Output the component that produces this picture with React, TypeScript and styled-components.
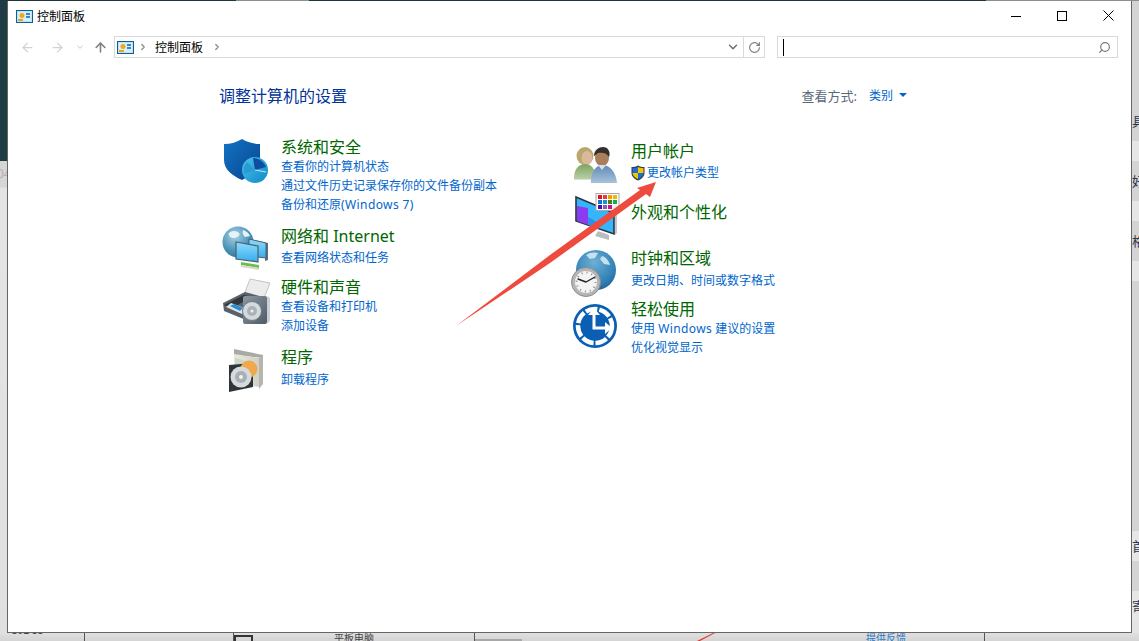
import React from "react";
import styled, { createGlobalStyle } from "styled-components";
import { ArrowLeft, ArrowRight, ArrowUp, ChevronDown, ChevronRight, RotateCw, Search } from "lucide-react";

const FONT = `"Noto Sans", "Noto Sans CJK SC", sans-serif`;

const GlobalStyle = createGlobalStyle`
  html, body { margin: 0; padding: 0; height: 100%; background: #dcdcdc; overflow: hidden; }
  body { font-family: ${FONT}; }
`;

const Desktop = styled.div`
  position: relative;
  width: 1139px;
  height: 641px;
  display: grid;
  grid-template-columns: 7px 1125px 7px;
  grid-template-rows: 1px 632px 8px;
  overflow: hidden;
`;

const TopStrip = styled.div`
  grid-column: 1 / 4;
  display: flex;
  background: #1d3640;
`;

const TopGap = styled.div<{ $left: number; $width: number }>`
  margin-left: ${(p) => p.$left}px;
  width: ${(p) => p.$width}px;
  background: #8e8e8e;
`;

const LeftStrip = styled.div`
  display: flex;
  flex-direction: column;
  overflow: hidden;
`;

const LeftTeal = styled.div`
  height: 160px;
  flex: none;
  background: #1f3c46;
`;

const LeftGrey = styled.div`
  flex: 1;
  background: linear-gradient(180deg, #d6d6d6 0, #d6d6d6 26px, #e4e4e4 27px, #e0e0e0 100%);
  color: #b0b0b0;
  font-size: 12px;
  line-height: 26px;
  text-indent: -3px;
`;

const RightStrip = styled.div`
  display: flex;
  flex-direction: column;
  overflow: hidden;
  background: #e4e4e4;
`;

const SideRow = styled.div<{ $h: number; $dark?: boolean }>`
  height: ${(p) => p.$h}px;
  flex: none;
  background: ${(p) => (p.$dark ? "#d4d4d4" : "#e6e6e6")};
  color: #2a3550;
  font-size: 13px;
  line-height: ${(p) => p.$h}px;
  white-space: nowrap;
  overflow: hidden;
`;

const BottomStrip = styled.div`
  grid-column: 1 / 4;
  display: flex;
  background: linear-gradient(180deg, #e0e0e0, #d4d4d4);
  overflow: hidden;
`;

const BottomCell = styled.div<{ $w: number; $line?: boolean; $pad?: number; $blue?: boolean }>`
  flex: none;
  width: ${(p) => p.$w}px;
  padding-left: ${(p) => p.$pad ?? 0}px;
  box-sizing: border-box;
  height: 8px;
  border-right: ${(p) => (p.$line ? "1px solid #555" : "none")};
  font-size: 10px;
  line-height: 11px;
  color: ${(p) => (p.$blue ? "#2b78c5" : "#444")};
  white-space: nowrap;
  overflow: hidden;
`;

const ClippedText = styled.span`
  display: block;
  margin-top: -8px;
`;

const StubBox = styled.div`
  margin-top: 2px;
  width: 15px;
  height: 12px;
  border: 2px solid #333;
`;

const GreyBar = styled.div`
  margin-top: 6px;
  width: 47px;
  height: 2px;
  background: #a8a8a8;
`;

const Window = styled.div`
  background: #fff;
  border: 1px solid #666;
  border-top: none;
  display: flex;
  flex-direction: column;
  min-width: 0;
  box-sizing: border-box;
`;

const TitleBar = styled.div`
  height: 30px;
  flex: none;
  display: flex;
  align-items: center;
  padding-left: 8px;
`;

const TitleText = styled.span`
  margin-left: 4px;
  font-size: 12px;
  color: #000;
`;

const WindowControls = styled.div`
  margin-left: auto;
  display: flex;
  height: 100%;
`;

const ControlButton = styled.div`
  width: 46px;
  display: flex;
  align-items: center;
  justify-content: center;
  padding-bottom: 1px;
  box-sizing: border-box;
`;

const NavRow = styled.div`
  margin-top: 5px;
  height: 22px;
  flex: none;
  display: flex;
  padding-right: 13px;
`;

const NavButtons = styled.div`
  width: 106px;
  flex: none;
  display: flex;
  align-items: center;
  padding-left: 11px;
  box-sizing: border-box;
`;

const NavSlot = styled.div<{ $w: number; $color: string; $gap?: number }>`
  width: ${(p) => p.$w}px;
  margin-left: ${(p) => p.$gap ?? 0}px;
  flex: none;
  display: flex;
  justify-content: center;
  color: ${(p) => p.$color};
`;

const AddressBox = styled.div`
  width: 651px;
  flex: none;
  box-sizing: border-box;
  border: 1px solid #d9d9d9;
  display: flex;
  align-items: center;
  padding-left: 2px;
  font-size: 12px;
  color: #000;
`;

const Crumb = styled.span`
  margin: 0 5px 0 7px;
`;

const CrumbArrow = styled.span`
  display: flex;
  margin-left: 4px;
  color: #8a8a8a;
`;

const AddressTools = styled.div`
  margin-left: auto;
  display: flex;
  height: 100%;
  align-items: center;
`;

const DropSlot = styled.div`
  width: 21px;
  display: flex;
  justify-content: center;
  color: #6f6f6f;
`;

const RefreshSlot = styled.div`
  width: 20px;
  height: 100%;
  border-left: 1px solid #d9d9d9;
  display: flex;
  align-items: center;
  justify-content: center;
  color: #7a7a7a;
`;

const SearchBox = styled.div`
  margin-left: 12px;
  flex: 1;
  box-sizing: border-box;
  border: 1px solid #d9d9d9;
  display: flex;
  align-items: center;
  justify-content: space-between;
  padding: 0 6px 0 5px;
  color: #7a7a7a;
`;

const MirroredSearch = styled(Search)`
  transform: scaleX(-1);
`;

const Caret = styled.div`
  width: 1px;
  height: 17px;
  background: #000;
`;

const Main = styled.main`
  width: 688px;
  margin: 27px 0 0 211px;
`;

const HeadRow = styled.div`
  height: 20px;
  display: flex;
  align-items: center;
  justify-content: space-between;
  margin-bottom: 32px;
`;

const Heading = styled.h1`
  margin: 0;
  font-size: 16px;
  font-weight: 400;
  color: #003399;
`;

const ViewBy = styled.div`
  display: flex;
  align-items: center;
  font-size: 13px;
  color: #5a6779;
`;

const ViewValue = styled.span`
  margin-left: 12px;
  font-size: 12px;
  color: #0066cc;
`;

const ViewCaret = styled.span`
  margin-left: 6px;
  width: 0;
  height: 0;
  border-left: 4px solid transparent;
  border-right: 4px solid transparent;
  border-top: 4px solid #0066cc;
`;

const Columns = styled.div`
  display: grid;
  grid-template-columns: 350px 1fr;
  margin-left: 2px;
`;

const Column = styled.div<{ $top?: number }>`
  display: flex;
  flex-direction: column;
  padding-top: ${(p) => p.$top ?? 0}px;
`;

const Category = styled.section<{ $h?: number }>`
  display: flex;
  height: ${(p) => (p.$h ? `${p.$h}px` : "auto")};
`;

const IconSlot = styled.div<{ $x: number; $y: number }>`
  width: 60px;
  height: 0;
  flex: none;
  box-sizing: border-box;
  margin-top: ${(p) => p.$y}px;
  padding-left: ${(p) => p.$x}px;
  svg { display: block; overflow: visible; }
`;

const CategoryTitle = styled.a`
  display: block;
  font-size: 16px;
  line-height: 20px;
  color: #006600;
`;

const LinkList = styled.div<{ $gap?: number }>`
  margin-top: ${(p) => p.$gap ?? 0}px;
  display: flex;
  flex-direction: column;
`;

const TaskLink = styled.a`
  display: flex;
  align-items: center;
  font-size: 12px;
  line-height: 19px;
  height: 19px;
  color: #0066cc;
  white-space: pre;
`;

const Latin = styled.span`
  letter-spacing: 0.4px;
`;

const ShieldWrap = styled.span`
  display: flex;
  margin-right: 2px;
`;

const ArrowOverlay = styled.svg`
  position: absolute;
  left: 0;
  top: 0;
  pointer-events: none;
`;

const PanelIcon = () => (
  <svg width="17" height="13" viewBox="0 0 17 13">
    <rect x="0.5" y="0.5" width="16" height="12" fill="#bfe3f5" stroke="#0f5f96" />
    <rect x="2" y="2" width="13" height="9" fill="#d9effa" />
    <circle cx="6" cy="5.5" r="2.500" fill="#f0a81c" />
    <rect x="10" y="3" width="4" height="2" fill="#3a86c8" />
    <rect x="10" y="6" width="4" height="2" fill="#3a86c8" />
    <rect x="2" y="9" width="5" height="2" fill="#e8a41f" />
  </svg>
);

const MinIcon = () => (
  <svg width="10" height="10" viewBox="0 0 10 10"><path d="M0 5.5h10" stroke="#000" /></svg>
);
const MaxIcon = () => (
  <svg width="10" height="10" viewBox="0 0 10 10"><rect x="0.5" y="0.5" width="9" height="9" fill="none" stroke="#000" /></svg>
);
const CloseIcon = () => (
  <svg width="11" height="11" viewBox="0 0 11 11"><path d="M0.5 0.5l10 10M10.5 0.5l-10 10" stroke="#000" /></svg>
);

const SecurityIcon = () => (
  <svg width="48" height="46" viewBox="0 0 48 46">
    <defs>
      <linearGradient id="sec1" x1="0" y1="0" x2="1" y2="1">
        <stop offset="0" stopColor="#1273c4" />
        <stop offset="1" stopColor="#07468f" />
      </linearGradient>
      <linearGradient id="sec2" x1="0" y1="0" x2="1" y2="1">
        <stop offset="0" stopColor="#4cc4e8" />
        <stop offset="1" stopColor="#0f87c9" />
      </linearGradient>
    </defs>
    <path d="M2 5C9 5 15 3 20 0C25 3 31 5 38 5V21C38 31 29 37 20 41C11 37 2 31 2 21Z" fill="url(#sec1)" />
    <circle cx="33" cy="31" r="13" fill="url(#sec2)" />
    <path d="M33 31L31 19C37 19 42 23 44 28Z" fill="#0d4ea0" />
    <path d="M33 31L22 35C21 31 22 26 25 23Z" fill="#2a9bd6" />
    <path d="M33 31L44 33" stroke="#bfe8f6" strokeWidth="1" />
  </svg>
);

const NetworkIcon = () => (
  <svg width="48" height="47" viewBox="0 0 48 47">
    <defs>
      <radialGradient id="net1" cx="0.4" cy="0.3" r="0.8">
        <stop offset="0" stopColor="#a9d2e4" />
        <stop offset="0.6" stopColor="#4a94b8" />
        <stop offset="1" stopColor="#2a6d92" />
      </radialGradient>
      <linearGradient id="net2" x1="0" y1="0" x2="0" y2="1">
        <stop offset="0" stopColor="#8fdcfc" />
        <stop offset="1" stopColor="#35adef" />
      </linearGradient>
    </defs>
    <circle cx="17" cy="17" r="15.5" fill="url(#net1)" />
    <path d="M8 8c4-3 8-2 10 0s-2 5-5 5-6-2-5-5zM22 5c3 1 6 3 7 6l-5 1c-2-2-3-4-2-7z" fill="#e6f2f6" />
    <path d="M28 14L47 18V35L44 36V18Z" fill="#5e6f7c" />
    <path d="M28 14L45 18V33L28 31Z" fill="url(#net2)" stroke="#4d5f6c" strokeWidth="1" />
    <path d="M15 17L37 21V37L15 34Z" fill="url(#net2)" stroke="#4d5f6c" strokeWidth="1.2" />
    <path d="M20 37L38 40V43L20 40Z" fill="#6cc04a" />
    <path d="M20 40L38 43V45L20 42Z" fill="#d7d7d7" />
  </svg>
);

const HardwareIcon = () => (
  <svg width="48" height="50" viewBox="0 0 48 50">
    <defs>
      <linearGradient id="hw1" x1="0" y1="0" x2="1" y2="1">
        <stop offset="0" stopColor="#8b98a2" />
        <stop offset="1" stopColor="#4f5c66" />
      </linearGradient>
    </defs>
    <path d="M28 1L48 5L42 20L22 17Z" fill="#ececec" stroke="#c4c4c4" />
    <path d="M1 25L23 14L45 20V30L24 42L2 33Z" fill="#5a6167" />
    <path d="M2 27L22 17L30 19L10 30Z" fill="#30363b" />
    <path d="M4 29L20 36L25 31L9 25Z" fill="#dfe6ea" />
    <path d="M8 28L18 33L21 30L12 26Z" fill="#2a8bd0" />
    <rect x="21" y="18" width="24" height="28" rx="2" fill="url(#hw1)" />
    <path d="M45 18L48 20V43L45 46Z" fill="#c9cfd4" />
    <circle cx="30" cy="33" r="9.500" fill="#d4d9dc" stroke="#6e7a83" />
    <circle cx="30" cy="33" r="5" fill="#aab2b8" />
    <circle cx="30" cy="33" r="1.500" fill="#eef0f2" />
  </svg>
);

const ProgramIcon = () => (
  <svg width="36" height="43" viewBox="0 0 36 43">
    <defs>
      <linearGradient id="pg1" x1="0" y1="0" x2="1" y2="0">
        <stop offset="0" stopColor="#e9e9e0" />
        <stop offset="1" stopColor="#cfd1c8" />
      </linearGradient>
    </defs>
    <path d="M6 0L35 6V9L6 6Z" fill="#a9aba3" />
    <path d="M6 5L31 9V38L6 34Z" fill="url(#pg1)" />
    <path d="M31 9L35 8V35L31 40Z" fill="#b5b7ae" />
    <path d="M7 9c5 1 9 2 12 5-2 3-6 4-12 3z" fill="#c9d9c9" />
    <path d="M1 16L25 14V38L1 43Z" fill="#2e3438" />
    <circle cx="21" cy="20" r="8.500" fill="#f0a94a" />
    <circle cx="13" cy="28" r="10.500" fill="#d6dadd" />
    <circle cx="13" cy="28" r="6" fill="#a9b0b5" />
    <circle cx="13" cy="28" r="2" fill="#f2f2f2" />
  </svg>
);

const UsersIcon = () => (
  <svg width="44" height="37" viewBox="0 0 44 37">
    <defs>
      <linearGradient id="us1" x1="0" y1="0" x2="0" y2="1">
        <stop offset="0" stopColor="#7fa35f" />
        <stop offset="1" stopColor="#b9cfa6" />
      </linearGradient>
      <linearGradient id="us2" x1="0" y1="0" x2="0" y2="1">
        <stop offset="0" stopColor="#5e8ab8" />
        <stop offset="1" stopColor="#a9c2da" />
      </linearGradient>
    </defs>
    <ellipse cx="11" cy="9" rx="8.500" ry="9" fill="#b9a76b" />
    <ellipse cx="13" cy="11" rx="5.500" ry="7" fill="#d9b99b" />
    <path d="M0 31C0 22 5 17 11 17C17 17 22 22 22 32H0Z" fill="url(#us1)" />
    <path d="M0 32H22V33H0Z" fill="#d9e3cd" />
    <ellipse cx="28" cy="11" rx="7" ry="8" fill="#a87e5d" />
    <path d="M20 9C20 3 25 0 29 0C34 0 37 5 35 10C33 6 29 5 24 6C22 7 21 9 20 9Z" fill="#33302c" />
    <path d="M17 36C16 26 22 18 28 18C36 18 42 25 43 36H17Z" fill="url(#us2)" />
    <path d="M24 18L28 23L32 18Z" fill="#d7e3ee" />
  </svg>
);

const PALETTE = [
  ["#e81123", "#f03a3a", "#f59d00", "#f5b800"],
  ["#0a78d0", "#0a9bd0", "#4d7f10", "#10b050"],
  ["#4b0fa8", "#8a5bc0", "#d01090", "#f0f0f0"],
];

const AppearanceIcon = () => (
  <svg width="45" height="48" viewBox="0 0 45 48">
    <path d="M23 38L34 42V47L20 43Z" fill="#b8bdc2" />
    <path d="M1 4L39 20V41L1 28Z" fill="#35b5fb" stroke="#2c343a" strokeWidth="1.6" />
    <path d="M2 13L13 15V32L2 28Z" fill="#8d3bf0" />
    <path d="M13 24L24 30V36L13 32Z" fill="#2f8fe8" />
    <path d="M40 20L42 19V40L40 42Z" fill="#c3c7cb" />
    <rect x="21" y="0.500" width="23" height="17" fill="#fff" stroke="#a8a8a8" />
    {PALETTE.map((row, r) =>
      row.map((c, i) => <rect key={`${r}-${i}`} x={23 + i * 5} y={2 + r * 5} width="4" height="4" fill={c} />)
    )}
  </svg>
);

const ClockIcon = () => (
  <svg width="46" height="47" viewBox="0 0 46 47">
    <defs>
      <radialGradient id="ck1" cx="0.45" cy="0.3" r="0.8">
        <stop offset="0" stopColor="#6fb0d4" />
        <stop offset="0.7" stopColor="#2d7fb4" />
        <stop offset="1" stopColor="#1c5a86" />
      </radialGradient>
    </defs>
    <circle cx="25" cy="20" r="20" fill="url(#ck1)" />
    <path d="M15 5c4-3 9-3 12-2l-3 5-5 1zM31 6c4 1 7 5 8 9l-6-1-4-5z" fill="#c5e0ee" />
    <circle cx="15" cy="32" r="14.500" fill="#b5b5b5" stroke="#8d8d8d" />
    <circle cx="15" cy="32" r="11" fill="#f4f4f4" />
    <circle cx="15" cy="32" r="9.500" fill="none" stroke="#888" strokeWidth="2" strokeDasharray="1 4" />
    <path d="M15 32L7 29M15 32L24 27" stroke="#222" strokeWidth="1.400" strokeLinecap="round" />
  </svg>
);

const EaseIcon = () => (
  <svg width="44" height="44" viewBox="0 0 44 44">
    <circle cx="22" cy="22" r="22" fill="#0a5fb4" />
    <circle cx="22" cy="22" r="17" fill="none" stroke="#fff" strokeWidth="4.500" strokeDasharray="12 2" />
    <circle cx="21" cy="24" r="12" fill="#0a5fb4" />
    <path d="M21 4V24H34" fill="none" stroke="#fff" strokeWidth="3" />
    <path d="M32 18L39 24L32 30Z" fill="#fff" />
    <path d="M15 11L21 4L27 11Z" fill="#fff" />
  </svg>
);

const UacShield = () => (
  <svg width="14" height="16" viewBox="0 0 14 16">
    <path d="M7 0.500C9 1.500 11 2 13.500 2V8C13.500 11.500 10.500 14 7 15.500C3.500 14 0.500 11.500 0.500 8V2C3 2 5 1.500 7 0.500Z" fill="#2d3f50" />
    <path d="M7 2C8.500 2.700 10 3 12.500 3.200V8H7Z" fill="#f5c400" />
    <path d="M7 2V8H1.500V3.200C4 3 5.500 2.700 7 2Z" fill="#1a6fd0" />
    <path d="M7 8H12.500C12.300 10.700 10 12.700 7 14Z" fill="#1a6fd0" />
    <path d="M7 8V14C4 12.700 1.700 10.700 1.500 8Z" fill="#f5c400" />
  </svg>
);

export default function App() {
  return (
    <Desktop>
      <GlobalStyle />
      <TopStrip>
        <TopGap $left={236} $width={73} />
        <TopGap $left={677} $width={153} />
      </TopStrip>
      <LeftStrip>
        <LeftTeal />
        <LeftGrey>04</LeftGrey>
      </LeftStrip>
      <Window>
        <TitleBar>
          <PanelIcon />
          <TitleText>控制面板</TitleText>
          <WindowControls>
            <ControlButton><MinIcon /></ControlButton>
            <ControlButton><MaxIcon /></ControlButton>
            <ControlButton><CloseIcon /></ControlButton>
          </WindowControls>
        </TitleBar>
        <NavRow>
          <NavButtons>
            <NavSlot $w={16} $color="#d2d2d2"><ArrowLeft size={15} strokeWidth={2} /></NavSlot>
            <NavSlot $w={16} $gap={14} $color="#d2d2d2"><ArrowRight size={15} strokeWidth={2} /></NavSlot>
            <NavSlot $w={16} $gap={7} $color="#d2d2d2"><ChevronDown size={10} strokeWidth={2.5} /></NavSlot>
            <NavSlot $w={24} $color="#808080"><ArrowUp size={15} strokeWidth={2.5} /></NavSlot>
          </NavButtons>
          <AddressBox>
            <PanelIcon />
            <CrumbArrow><ChevronRight size={10} strokeWidth={3} /></CrumbArrow>
            <Crumb>控制面板</Crumb>
            <CrumbArrow><ChevronRight size={10} strokeWidth={3} /></CrumbArrow>
            <AddressTools>
              <DropSlot><ChevronDown size={14} strokeWidth={2.5} /></DropSlot>
              <RefreshSlot><RotateCw size={13} strokeWidth={2} /></RefreshSlot>
            </AddressTools>
          </AddressBox>
          <SearchBox>
            <Caret />
            <MirroredSearch size={13} strokeWidth={2.2} />
          </SearchBox>
        </NavRow>
        <Main>
          <HeadRow>
            <Heading>调整计算机的设置</Heading>
            <ViewBy>
              查看方式:
              <ViewValue>类别</ViewValue>
              <ViewCaret />
            </ViewBy>
          </HeadRow>
          <Columns>
            <Column>
              <Category $h={89}>
                <IconSlot $x={1} $y={2}><SecurityIcon /></IconSlot>
                <div>
                  <CategoryTitle>系统和安全</CategoryTitle>
                  <LinkList>
                    <TaskLink>查看你的计算机状态</TaskLink>
                    <TaskLink>通过文件历史记录保存你的文件备份副本</TaskLink>
                    <TaskLink>备份和还原<Latin>(Windows 7)</Latin></TaskLink>
                  </LinkList>
                </div>
              </Category>
              <Category $h={51}>
                <IconSlot $x={0} $y={-1}><NetworkIcon /></IconSlot>
                <div>
                  <CategoryTitle>网络和 Internet</CategoryTitle>
                  <LinkList $gap={2}>
                    <TaskLink>查看网络状态和任务</TaskLink>
                  </LinkList>
                </div>
              </Category>
              <Category $h={70}>
                <IconSlot $x={1} $y={1}><HardwareIcon /></IconSlot>
                <div>
                  <CategoryTitle>硬件和声音</CategoryTitle>
                  <LinkList>
                    <TaskLink>查看设备和打印机</TaskLink>
                    <TaskLink>添加设备</TaskLink>
                  </LinkList>
                </div>
              </Category>
              <Category>
                <IconSlot $x={7} $y={2}><ProgramIcon /></IconSlot>
                <div>
                  <CategoryTitle>程序</CategoryTitle>
                  <LinkList $gap={3}>
                    <TaskLink>卸载程序</TaskLink>
                  </LinkList>
                </div>
              </Category>
            </Column>
            <Column $top={4}>
              <Category $h={61}>
                <IconSlot $x={3} $y={6}><UsersIcon /></IconSlot>
                <div>
                  <CategoryTitle>用户帐户</CategoryTitle>
                  <LinkList $gap={2}>
                    <TaskLink>
                      <ShieldWrap><UacShield /></ShieldWrap>
                      更改帐户类型
                    </TaskLink>
                  </LinkList>
                </div>
              </Category>
              <Category $h={46}>
                <IconSlot $x={4} $y={-9}><AppearanceIcon /></IconSlot>
                <div>
                  <CategoryTitle>外观和个性化</CategoryTitle>
                </div>
              </Category>
              <Category $h={51}>
                <IconSlot $x={0} $y={2}><ClockIcon /></IconSlot>
                <div>
                  <CategoryTitle>时钟和区域</CategoryTitle>
                  <LinkList $gap={3}>
                    <TaskLink>更改日期、时间或数字格式</TaskLink>
                  </LinkList>
                </div>
              </Category>
              <Category>
                <IconSlot $x={2} $y={5}><EaseIcon /></IconSlot>
                <div>
                  <CategoryTitle>轻松使用</CategoryTitle>
                  <LinkList>
                    <TaskLink>使用 <Latin>Windows</Latin> 建议的设置</TaskLink>
                    <TaskLink>优化视觉显示</TaskLink>
                  </LinkList>
                </div>
              </Category>
            </Column>
          </Columns>
        </Main>
      </Window>
      <RightStrip>
        <SideRow $h={100} $dark />
        <SideRow $h={40} $dark>具</SideRow>
        <SideRow $h={20} />
        <SideRow $h={40} $dark>好</SideRow>
        <SideRow $h={20} />
        <SideRow $h={40} $dark>格</SideRow>
        <SideRow $h={20} />
        <SideRow $h={250} $dark />
        <SideRow $h={30}>首</SideRow>
        <SideRow $h={30} $dark />
        <SideRow $h={30}>寄</SideRow>
      </RightStrip>
      <BottomStrip>
        <BottomCell $w={85} $pad={12} $line><ClippedText>392 88</ClippedText></BottomCell>
        <BottomCell $w={149} $line />
        <BottomCell $w={38}><StubBox /></BottomCell>
        <BottomCell $w={45} />
        <BottomCell $w={158} $pad={17} $line>平板电脑</BottomCell>
        <BottomCell $w={286}><GreyBar /></BottomCell>
        <BottomCell $w={89} />
        <BottomCell $w={135} $pad={16} $line $blue>提供反馈</BottomCell>
        <BottomCell $w={154} />
      </BottomStrip>
      <ArrowOverlay width="1139" height="641" viewBox="0 0 1139 641">
        <path d="M456 326L550 255L640 190L637 188L656 182L650 197L646 194L550 263Z" fill="#ee4b3f" />
        <path d="M697 641L713 633L715 633L700 641Z" fill="#e23a30" />
      </ArrowOverlay>
    </Desktop>
  );
}
